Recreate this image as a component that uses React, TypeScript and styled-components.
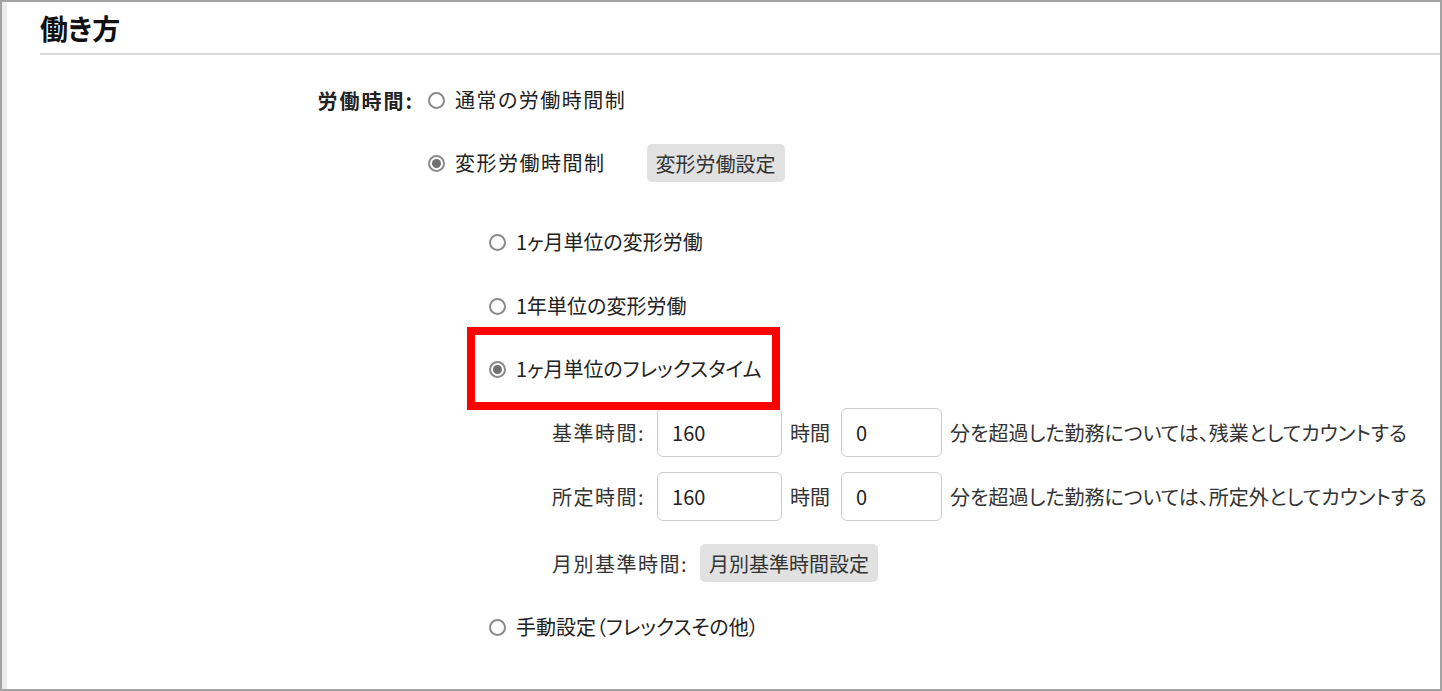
import styled, { createGlobalStyle } from 'styled-components';

const GlobalStyle = createGlobalStyle`
  html, body {
    margin: 0;
    padding: 0;
    background: #ffffff;
  }

  body {
    font-family: "Noto Sans CJK JP", "Noto Sans", sans-serif;
    font-feature-settings: "palt";
    color: #222222;
  }
`;

const subOptions = [
  { id: 'month', label: '1ヶ月単位の変形労働', gap: 39 },
  { id: 'year', label: '1年単位の変形労働', gap: 24 },
];

const flexFields = [
  { id: 'base', label: '基準時間:', hours: '160', minutes: '0', note: '分を超過した勤務については、残業としてカウントする', gap: 19 },
  { id: 'fixed', label: '所定時間:', hours: '160', minutes: '0', note: '分を超過した勤務については、所定外としてカウントする', gap: 15 },
];

function App() {
  return (
    <>
      <GlobalStyle />
      <Frame>
        <Header>
          <Title>働き方</Title>
        </Header>
        <Form>
          <FieldLabel>労働時間:</FieldLabel>
          <Options>
            <Option>
              <Radio type="radio" name="worktime" />
              <OptionText $spaced>通常の労働時間制</OptionText>
            </Option>

            <Option $gap={23}>
              <Radio type="radio" name="worktime" defaultChecked />
              <OptionText $spaced>変形労働時間制</OptionText>
              <GrayButton type="button" $offset={31}>
                変形労働設定
              </GrayButton>
            </Option>

            <SubGroup>
              {subOptions.map((opt) => (
                <Option key={opt.id} $gap={opt.gap}>
                  <Radio type="radio" name="variable" />
                  <OptionText>{opt.label}</OptionText>
                </Option>
              ))}

              <Option $gap={23}>
                <Highlight />
                <Radio type="radio" name="variable" defaultChecked />
                <OptionText>1ヶ月単位のフレックスタイム</OptionText>
              </Option>

              <FlexFields>
                {flexFields.map((field) => (
                  <FieldRow key={field.id} $gap={field.gap}>
                    <SubLabel>{field.label}</SubLabel>
                    <NumberInput defaultValue={field.hours} $width={125} />
                    <Unit>時間</Unit>
                    <NumberInput defaultValue={field.minutes} $width={101} />
                    <Note>{field.note}</Note>
                  </FieldRow>
                ))}
                <FieldRow $gap={22} $short>
                  <SubLabel>月別基準時間:</SubLabel>
                  <GrayButton type="button" $offset={0}>
                    月別基準時間設定
                  </GrayButton>
                </FieldRow>
              </FlexFields>

              <Option $gap={24}>
                <Radio type="radio" name="variable" />
                <OptionText>手動設定（フレックスその他）</OptionText>
              </Option>
            </SubGroup>
          </Options>
        </Form>
      </Frame>
    </>
  );
}

export default App;

const Frame = styled.div`
  width: 1442px;
  height: 691px;
  box-sizing: border-box;
  border: 2px solid #a3a3a3;
  box-shadow: inset 5px 0 0 #ececec;
  background: #ffffff;
  overflow: hidden;
`;

const Header = styled.div`
  margin-left: 38px;
  height: 51px;
  border-bottom: 2px solid #d9d9d9;
  display: flex;
  align-items: center;
`;

const Title = styled.h1`
  margin: 0;
  font-size: 28px;
  font-weight: 700;
  line-height: 36px;
  color: #111111;
`;

const Form = styled.div`
  display: grid;
  grid-template-columns: 412px 1fr;
  column-gap: 14px;
  padding-top: 25px;
`;

const FieldLabel = styled.div`
  height: 40px;
  display: flex;
  align-items: center;
  justify-content: flex-end;
  font-size: 20px;
  font-weight: 700;
  letter-spacing: 2px;
  color: #222222;
`;

const Options = styled.div`
  display: flex;
  flex-direction: column;
`;

const Option = styled.label<{ $gap?: number }>`
  position: relative;
  height: 40px;
  margin-top: ${({ $gap }) => $gap ?? 0}px;
  display: flex;
  align-items: center;
  gap: 10px;
  font-size: 20px;
  color: #222222;
`;

const OptionText = styled.span<{ $spaced?: boolean }>`
  line-height: 24px;
  letter-spacing: ${({ $spaced }) => ($spaced ? '1.5px' : '0')};
`;

const Radio = styled.input`
  appearance: none;
  margin: 0;
  width: 17px;
  height: 17px;
  flex: none;
  border-radius: 50%;
  border: 2px solid #8a8a8a;
  background: #ffffff;
  box-sizing: border-box;
  display: grid;
  place-items: center;

  &:checked::after {
    content: '';
    width: 9px;
    height: 9px;
    border-radius: 50%;
    background: #707070;
  }
`;

const GrayButton = styled.button<{ $offset: number }>`
  margin-left: ${({ $offset }) => $offset}px;
  height: 38px;
  padding: 0 9px;
  border: none;
  border-radius: 5px;
  background: #e1e1e1;
  font-family: inherit;
  font-feature-settings: "palt";
  font-size: 20px;
  color: #333333;
`;

const SubGroup = styled.div`
  display: flex;
  flex-direction: column;
  padding-left: 61px;
`;

const Highlight = styled.span`
  position: absolute;
  left: -22px;
  top: -22px;
  width: 313px;
  height: 83px;
  box-sizing: border-box;
  border: 8px solid #ff0000;
  pointer-events: none;
  z-index: 1;
`;

const FlexFields = styled.div`
  display: flex;
  flex-direction: column;
  padding-left: 63px;
`;

const FieldRow = styled.div<{ $gap: number; $short?: boolean }>`
  height: ${({ $short }) => ($short ? 40 : 49)}px;
  margin-top: ${({ $gap }) => $gap}px;
  display: flex;
  align-items: center;
  font-size: 20px;
  color: #333333;
`;

const SubLabel = styled.span`
  margin-right: 12px;
  letter-spacing: 1.5px;
`;

const NumberInput = styled.input<{ $width: number }>`
  width: ${({ $width }) => $width}px;
  height: 49px;
  box-sizing: border-box;
  padding: 0 14px;
  border: 1px solid #cccccc;
  border-radius: 6px;
  font-family: inherit;
  font-size: 20px;
  color: #222222;
  background: #ffffff;
`;

const Unit = styled.span`
  margin: 0 11px 0 8px;
`;

const Note = styled.span`
  margin-left: 8px;
  white-space: nowrap;
`;
